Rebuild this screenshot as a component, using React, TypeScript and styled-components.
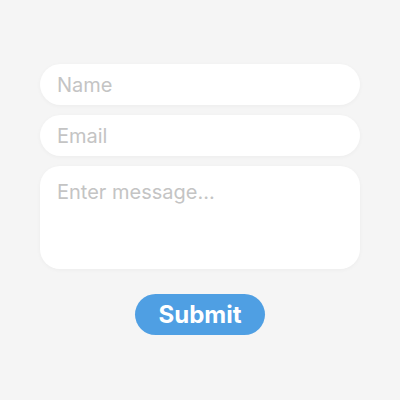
import React from 'react';
import styled, { createGlobalStyle } from 'styled-components';

const GlobalStyle = createGlobalStyle`
  html, body {
    margin: 0;
    padding: 0;
    background: #f5f5f5;
    font-family: Inter, "Noto Sans", sans-serif;
  }
`;

const Page = styled.div`
  min-height: 100vh;
  display: flex;
  align-items: center;
  justify-content: center;
`;

const Form = styled.form`
  width: 320px;
  display: flex;
  flex-direction: column;
  align-items: center;
  margin-top: -1px;
`;

const Fields = styled.div`
  width: 100%;
  display: flex;
  flex-direction: column;
  gap: 10px;
`;

const fieldBase = `
  box-sizing: border-box;
  width: 100%;
  border: none;
  outline: none;
  background: #ffffff;
  font-family: Inter, "Noto Sans", sans-serif;
  font-size: 20px;
  color: #333;
  box-shadow: 0 1px 4px rgba(0, 0, 0, 0.04);
  &::placeholder {
    color: #c4c4c4;
  }
`;

const Input = styled.input`
  ${fieldBase}
  height: 41px;
  padding: 0 17px;
  border-radius: 21px;
`;

const TextArea = styled.textarea`
  ${fieldBase}
  display: block;
  height: 103px;
  padding: 14px 17px;
  line-height: 24px;
  border-radius: 20px;
  resize: none;
`;

const SubmitButton = styled.button`
  margin-top: 25px;
  width: 130px;
  height: 41px;
  padding: 0;
  border: none;
  border-radius: 21px;
  background: #4f9fe3;
  color: #ffffff;
  font-family: Inter, "Noto Sans", sans-serif;
  font-size: 24px;
  font-weight: 700;
  cursor: pointer;
`;

export default function App() {
  return (
    <>
      <GlobalStyle />
      <Page>
        <Form onSubmit={(e) => e.preventDefault()}>
          <Fields>
            <Input placeholder="Name" />
            <Input placeholder="Email" />
            <TextArea placeholder="Enter message..." />
          </Fields>
          <SubmitButton type="submit">Submit</SubmitButton>
        </Form>
      </Page>
    </>
  );
}
